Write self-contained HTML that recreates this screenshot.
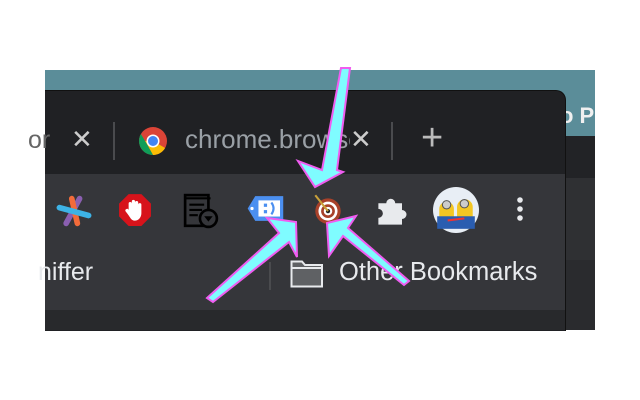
<!DOCTYPE html>
<html><head><meta charset="utf-8"><style>
body{margin:0;width:640px;height:400px;background:#fff;position:relative;overflow:hidden;font-family:"Liberation Sans",sans-serif}
.a{position:absolute}
</style></head><body>
<div class="a" style="left:45px;top:70px;width:550px;height:260px;background:#2a2b2e"></div>
<div class="a" style="left:45px;top:70px;width:550px;height:66px;background:#5b8d99"></div>
<div class="a" style="left:565px;top:136px;width:30px;height:42px;background:#222326"></div>
<div class="a" style="left:565px;top:178px;width:30px;height:82px;background:#2f3033"></div>
<div class="a" style="left:560px;top:103px;color:#f0f0f0;font-size:22px;font-weight:bold">o P</div>
<div class="a" style="left:45px;top:90px;width:520px;height:240px;background:#202124;border-top-right-radius:10px;border:1px solid #111;border-left:none;border-bottom:none"></div>
<div class="a" style="left:45px;top:174px;width:520px;height:136px;background:#35363a"></div>
<div class="a" style="left:45px;top:310px;width:520px;height:20px;background:#28292c"></div>
<!-- tabs -->
<div class="a" style="left:28px;top:126px;color:#666;font-size:25px">or</div>
<div class="a" style="left:71px;top:124px;color:#ccc;font-size:26px">✕</div>
<div class="a" style="left:113px;top:122px;width:2px;height:38px;background:#4a4b4e"></div>
<svg class="a" style="left:138px;top:126px" width="30" height="30" viewBox="0 0 30 30"><circle cx="15" cy="15" r="14" fill="#db4437"/><path d="M15 15 L27.1 22 A14 14 0 0 1 15 29 L7 15Z" fill="#fbbc05"/><path d="M2.9 8 L10 20 L15 29 A14 14 0 0 1 2.9 8Z" fill="#0f9d58"/><circle cx="15" cy="15" r="6.5" fill="#fff"/><circle cx="15" cy="15" r="5" fill="#4285f4"/></svg>
<div class="a" style="left:185px;top:124px;color:#9aa0a6;font-size:26px;width:165px;overflow:hidden;white-space:nowrap">chrome.browser</div>
<div class="a" style="left:350px;top:124px;color:#ccc;font-size:26px">✕</div>
<div class="a" style="left:391px;top:122px;width:2px;height:38px;background:#4a4b4e"></div>
<div class="a" style="left:421px;top:117px;color:#bbb;font-size:38px">+</div>
<!-- toolbar icons -->
<svg class="a" style="left:56px;top:193px" width="36" height="36" viewBox="0 0 32 32"><path d="M9 27 L21 5" stroke="#8a5fb0" stroke-width="5" stroke-linecap="round"/><path d="M14 5 L19 27" stroke="#f26b3a" stroke-width="5" stroke-linecap="round"/><path d="M3 13 L29 20" stroke="#3db3e6" stroke-width="5" stroke-linecap="round"/></svg>
<svg class="a" style="left:118px;top:193px" width="34" height="34" viewBox="0 0 32 32"><polygon points="10,1 22,1 31,10 31,22 22,31 10,31 1,22 1,10" fill="#d7131b"/><path d="M10 18 V10 a1.5 1.5 0 0 1 3 0 V8 a1.5 1.5 0 0 1 3 0 V9 a1.5 1.5 0 0 1 3 0 V11 a1.5 1.5 0 0 1 3 0 V19 c0 4-3 7-6 7 c-3 0-4-2-6-5 l-3-4 a1.5 1.5 0 0 1 3-1Z" fill="#fff"/></svg>
<svg class="a" style="left:183px;top:193px" width="36" height="36" viewBox="0 0 34 34"><rect x="2" y="2" width="22" height="29" fill="none" stroke="#000" stroke-width="2.5"/><path d="M2 5 H26 M6 11 H20 M6 16 H18 M6 21 H14" stroke="#000" stroke-width="2"/><circle cx="24" cy="24" r="8" fill="#35363a" stroke="#000" stroke-width="2.5"/><path d="M20 22 H28 L24 27Z" fill="#000"/></svg>
<svg class="a" style="left:246px;top:195px" width="40" height="28" viewBox="0 0 36 26"><path d="M8 1 H34 V24 H8 L1 12.5Z" fill="#4b8ff0"/><rect x="11" y="5" width="20" height="15" fill="#fff"/><circle cx="5" cy="12.5" r="1.5" fill="#fff"/><rect x="16" y="8" width="3" height="3" fill="#4b8ff0"/><rect x="16" y="14" width="3" height="3" fill="#4b8ff0"/><path d="M23 7 q4 5.5 0 11" stroke="#4b8ff0" stroke-width="2" fill="none"/></svg>
<svg class="a" style="left:310px;top:192px" width="36" height="34" viewBox="0 0 34 32"><circle cx="17" cy="18" r="12" fill="#a8412a"/><circle cx="17" cy="18" r="9" fill="#fff"/><circle cx="17" cy="18" r="6.5" fill="#a8412a"/><circle cx="17" cy="18" r="4" fill="#fff"/><circle cx="17" cy="18" r="2" fill="#222"/><path d="M5 3 L17 18" stroke="#c9a13a" stroke-width="2"/></svg>
<svg class="a" style="left:375px;top:193px" width="36" height="34" viewBox="0 0 32 30"><path d="M3 9 H10 a4 4 0 1 1 8 0 H24 V15 a4 4 0 1 1 0 8 V28 H3 V22 a4 4 0 1 0 0-8Z" fill="#e8eaed"/></svg>
<svg class="a" style="left:433px;top:187px" width="46" height="46" viewBox="0 0 44 44"><circle cx="22" cy="22" r="22" fill="#e8eef5"/><rect x="6" y="14" width="14" height="24" rx="7" fill="#f3c623"/><rect x="23" y="12" width="15" height="26" rx="7" fill="#f3c623"/><circle cx="13" cy="17" r="4" fill="#ccc" stroke="#555"/><circle cx="30" cy="16" r="4" fill="#ccc" stroke="#555"/><rect x="4" y="28" width="36" height="12" fill="#2a5db0"/><path d="M14 32 L30 30" stroke="#e33" stroke-width="2"/></svg>
<svg class="a" style="left:512px;top:196px" width="16" height="28" viewBox="0 0 16 28"><circle cx="8" cy="4" r="2.8" fill="#e8eaed"/><circle cx="8" cy="13" r="2.8" fill="#e8eaed"/><circle cx="8" cy="22" r="2.8" fill="#e8eaed"/></svg>
<!-- bookmarks -->
<div class="a" style="left:38px;top:258px;color:#e8eaed;font-size:25px">niffer</div>
<div class="a" style="left:269px;top:262px;width:2px;height:28px;background:#4a4b4e"></div>
<svg class="a" style="left:290px;top:260px" width="34" height="28" viewBox="0 0 34 28"><path d="M1.5 1.5 H12 L15 5 H32 V26.5 H1.5Z" fill="#5f6164" stroke="#e8eaed" stroke-width="2"/><path d="M1.5 8 H32" stroke="#e8eaed" stroke-width="2"/></svg>
<div class="a" style="left:339px;top:258px;color:#e8eaed;font-size:25.5px">Other Bookmarks</div>
<!-- arrows -->
<svg class="a" style="left:0;top:0" width="640" height="400" viewBox="0 0 640 400"><g fill="#7ffcff" stroke="#f05cf0" stroke-width="2" stroke-linejoin="miter">
<polygon points="341,68 350,68 337,170 343,172 315,187 298,161 322,170"/>
<polygon points="207,298 279,233 267,218 296,222 297,257 289,242 213,302"/>
<polygon points="404,285 343,236 329,256 327,223 356,216 348,228 409,281"/>
</g></svg>
</body></html>
